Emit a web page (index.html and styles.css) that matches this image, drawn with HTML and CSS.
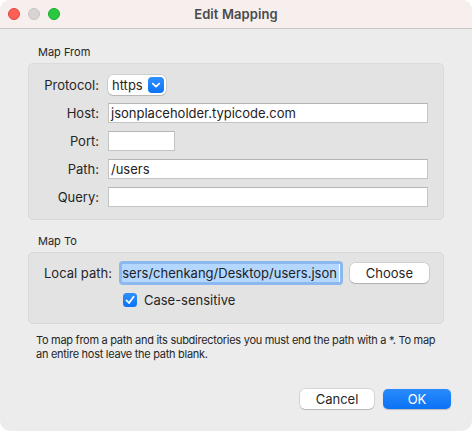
FILE: index.html
```html
<!DOCTYPE html>
<html>
<head>
<meta charset="utf-8">
<link rel="stylesheet" href="styles.css">
</head>
<body>
<div class="window">
  <div class="titlebar">
    <div class="lights">
      <span class="light red"></span>
      <span class="light gray"></span>
      <span class="light green"></span>
    </div>
    <div class="title">Edit Mapping</div>
  </div>
  <div class="content">
    <div class="group-label">Map From</div>
    <div class="box from">
      <div class="label">Protocol:</div>
      <div class="popup"><span class="popup-text">https</span><span class="chev"><svg width="16" height="16" viewBox="0 0 16 16"><path d="M4.8 6.6 L8 9.6 L11.2 6.6" fill="none" stroke="#fff" stroke-width="1.7" stroke-linecap="round" stroke-linejoin="round"/></svg></span></div>
      <div class="label">Host:</div>
      <div class="field">jsonplaceholder.typicode.com</div>
      <div class="label">Port:</div>
      <div class="field short"></div>
      <div class="label">Path:</div>
      <div class="field">/users</div>
      <div class="label">Query:</div>
      <div class="field"></div>
    </div>
    <div class="group-label to-label">Map To</div>
    <div class="box to">
      <div class="label">Local path:</div>
      <div class="focus"><div class="field local"><span class="sel">/Users/chenkang/Desktop/users.json</span></div></div>
      <div class="btn choose">Choose</div>
      <div class="check-row">
        <span class="checkbox"><svg width="14" height="14" viewBox="0 0 14 14"><path d="M3.5 7.4 L6 10 L10.6 3.8" fill="none" stroke="#fff" stroke-width="1.8" stroke-linecap="round" stroke-linejoin="round"/></svg></span>
        <span>Case-sensitive</span>
      </div>
    </div>
    <p class="note"><span class="line">To map from a path and its subdirectories you must end the path with a *. To map</span><span class="line">an entire host leave the path blank.</span></p>
    <div class="actions">
      <div class="btn cancel">Cancel</div>
      <div class="btn ok">OK</div>
    </div>
  </div>
</div>
</body>
</html>
```
FILE: styles.css
```css
* { box-sizing: border-box; }
html, body { margin: 0; padding: 0; background: #ffffff; }
body {
  font-family: Inter, "Liberation Sans", sans-serif;
  color: #262626;
}
.window {
  width: 472px;
  height: 431px;
  border-radius: 10px;
  overflow: hidden;
  background: #ececec;
  display: flex;
  flex-direction: column;
}
.titlebar {
  height: 29px;
  flex: none;
  background: #f7efee;
  border-bottom: 1px solid #c9c6c6;
  display: grid;
  grid-template-columns: 1fr;
  align-items: center;
}
.lights, .title { grid-area: 1 / 1; }
.lights {
  display: flex;
  gap: 8px;
  padding-left: 8px;
  align-self: center;
}
.light {
  width: 12px;
  height: 12px;
  border-radius: 50%;
  display: block;
}
.red { background: #fe5f57; border: 0.5px solid #e14640; }
.gray { background: #d9d4d4; border: 0.5px solid #c8c2c2; }
.green { background: #28c840; border: 0.5px solid #1aab29; }
.title {
  text-align: center;
  font-weight: 600;
  font-size: 13px;
  color: #4a4a4a;
  letter-spacing: 0.1px;
}
.content {
  padding: 16px 28px 0 28px;
  flex: 1;
  display: flex;
  flex-direction: column;
}
.group-label {
  font-size: 11px;
  line-height: 14px;
  padding-left: 10px;
  height: 18px;
  color: #262626;
}
.to-label { margin-top: 14px; }
.box {
  background: #e3e3e3;
  border: 1px solid #dadada;
  border-radius: 5px;
  font-size: 13px;
}
.from {
  display: grid;
  grid-template-columns: 55px 1fr;
  column-gap: 9px;
  row-gap: 8px;
  padding: 11px 15px 12px 15px;
  height: 157px;
}
.label {
  text-align: right;
  line-height: 20px;
  height: 20px;
  white-space: nowrap;
  color: #262626;
}
.field {
  height: 20px;
  background: #ffffff;
  border: 1px solid #c4c4c4;
  border-top-color: #b5b5b5;
  padding: 0 2px;
  line-height: 18px;
  white-space: nowrap;
  overflow: hidden;
  color: #222;
}
.field.short { width: 67px; }
.popup {
  width: 58px;
  height: 20px;
  background: #ffffff;
  border-radius: 5px;
  box-shadow: 0 0 0 0.5px rgba(0,0,0,0.18), 0 1px 1px rgba(0,0,0,0.12);
  display: flex;
  align-items: center;
  justify-content: space-between;
  padding: 0 2px 0 4px;
}
.popup-text { line-height: 20px; }
.chev {
  width: 16px;
  height: 16px;
  border-radius: 4px;
  background: linear-gradient(#2f8ffd, #0a73f5);
  display: flex;
}
.to {
  height: 72px;
  display: grid;
  grid-template-columns: auto 224px 79px;
  grid-template-rows: 24px 20px;
  column-gap: 7px;
  row-gap: 5px;
  padding: 8px 15px 0 15px;
  align-items: center;
}
.focus {
  padding: 3px;
  border-radius: 4px;
  background: #8db8ee;
  height: 24px;
}
.field.local {
  height: 18px;
  border: none;
  display: flex;
  justify-content: flex-end;
  padding: 0 1px;
  line-height: 18px;
}
.sel {
  background: #b3d7ff;
  flex: none;
  padding-right: 2px;
}
.btn {
  height: 20px;
  border-radius: 5px;
  background: #ffffff;
  box-shadow: 0 0 0 0.5px rgba(0,0,0,0.18), 0 1px 1px rgba(0,0,0,0.14);
  text-align: center;
  line-height: 20px;
  font-size: 13px;
  color: #262626;
}
.choose { width: 79px; }
.check-row {
  grid-column: 2 / 4;
  display: flex;
  align-items: center;
  gap: 7px;
  padding-left: 4px;
  height: 20px;
}
.checkbox {
  width: 14px;
  height: 14px;
  border-radius: 3.5px;
  background: linear-gradient(#2f8ffd, #0a73f5);
  display: flex;
}
.note {
  font-size: 11px;
  line-height: 14px;
  margin: 9px 0 0 8px;
  color: #262626;
  letter-spacing: -0.28px;
}
.line {
  display: block;
  white-space: nowrap;
}
.actions {
  margin-top: 28px;
  display: flex;
  justify-content: flex-end;
  gap: 9px;
  margin-right: -7px;
}
.cancel { width: 74px; }
.ok {
  width: 68px;
  background: linear-gradient(#2a8bfd, #0b72f5);
  color: #ffffff;
  box-shadow: 0 0.5px 1px rgba(0,0,0,0.2);
}
```
